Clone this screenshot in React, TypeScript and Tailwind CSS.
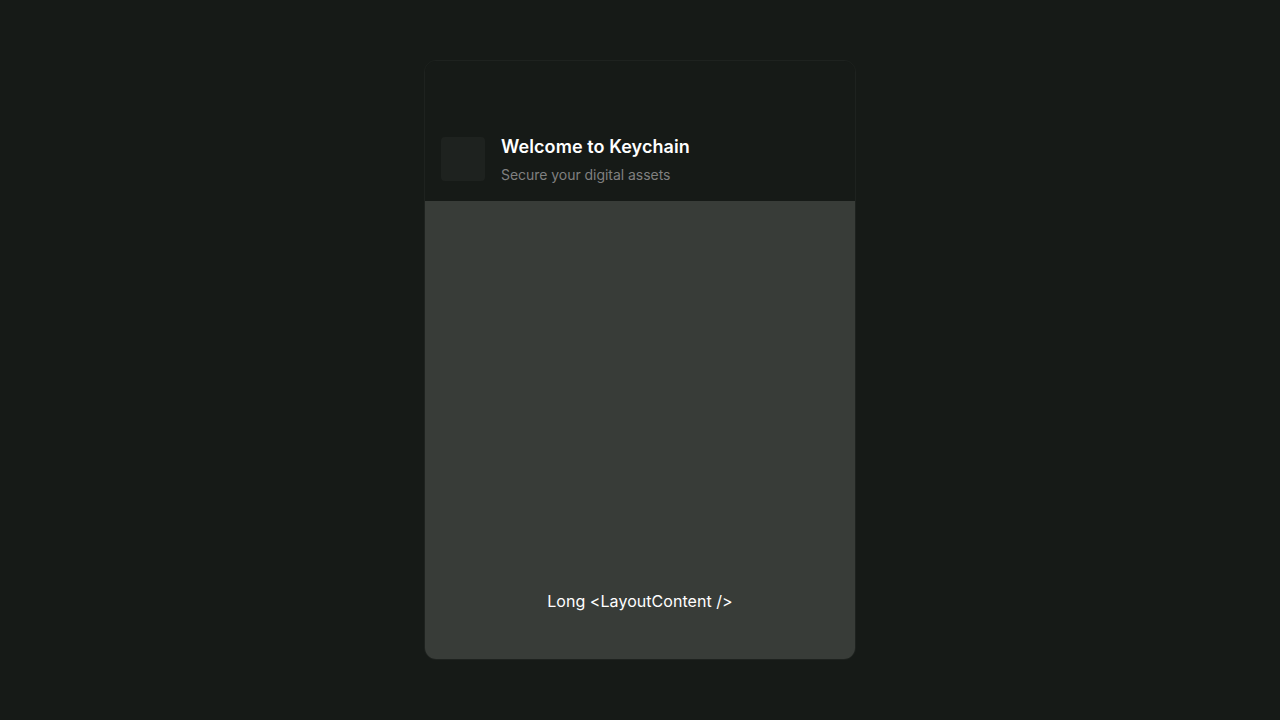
import React from "react";

function Header() {
  return (
    <header className="flex h-[140px] shrink-0 items-end bg-[#161a17] px-4 pb-4">
      <div className="flex items-center gap-4">
        <div className="size-11 rounded-[4px] bg-[#1e221f]" />
        <div className="flex flex-col gap-1">
          <h1 className="text-lg font-semibold tracking-[0.08px] text-white">Welcome to Keychain</h1>
          <p className="text-sm tracking-[-0.04px] text-[#808080]">Secure your digital assets</p>
        </div>
      </div>
    </header>
  );
}

export default function App() {
  return (
    <div className="flex h-screen items-center justify-center bg-[#161a17] font-['Inter',sans-serif]">
      <main className="flex h-[600px] w-[432px] flex-col overflow-hidden rounded-xl border border-[#1e221f]">
        <Header />
        <section className="flex grow flex-col items-center justify-end bg-[#383c38] pb-[46px] text-base text-white">
          <p className="tracking-[0.05px]">Long &lt;LayoutContent /&gt;</p>
        </section>
      </main>
    </div>
  );
}
